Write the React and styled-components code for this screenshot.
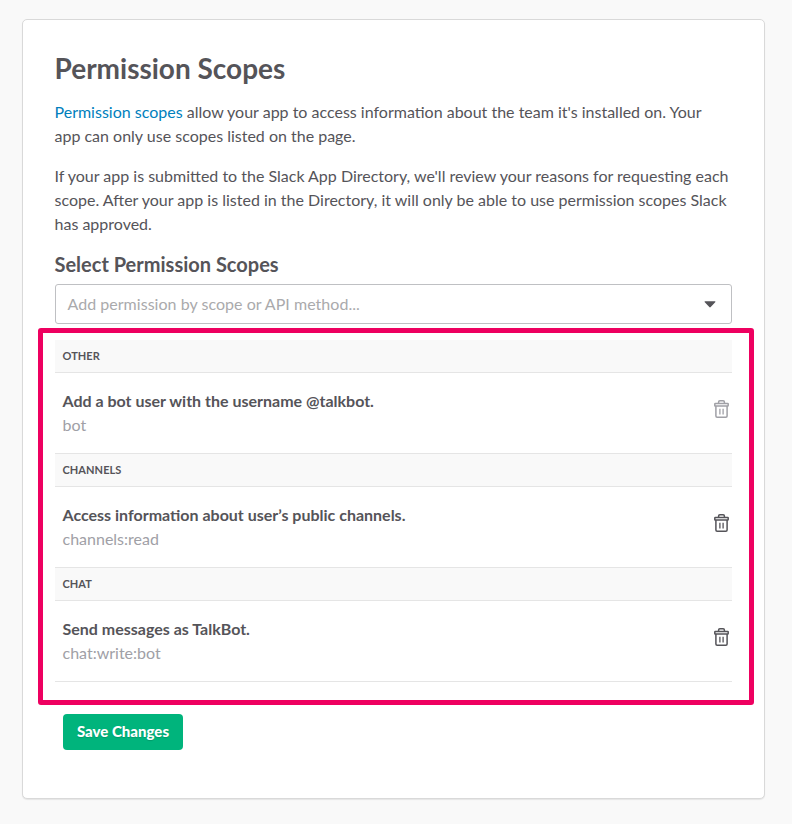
import React from 'react';
import styled, { createGlobalStyle } from 'styled-components';

const GlobalStyle = createGlobalStyle`
  *, *::before, *::after { box-sizing: border-box; }
  body { margin: 0; background: #f9f9f9; font-family: Lato, sans-serif; color: #555459; }
`;

const Page = styled.main`
  min-height: 824px;
  padding: 19px 27px 25px 22px;
  background: #f9f9f9;
`;

const Card = styled.section`
  height: 780px;
  padding: 30px 32px 0;
  background: #fff;
  border: 1px solid #d9d9d9;
  border-radius: 5px;
  box-shadow: 0 1px 1px rgba(0, 0, 0, 0.08);
`;

const Title = styled.h1`
  margin: 0 0 14px -0.5px;
  font-size: 28px;
  line-height: 36px;
  font-weight: 700;
`;

const Paragraph = styled.p`
  margin: 0 0 16px -0.5px;
  font-size: 16px;
  line-height: 24px;
  white-space: nowrap;
`;

const Link = styled.a`
  color: #0080bd;
  text-decoration: none;
`;

const Subtitle = styled.h2`
  margin: 0 0 8px -0.5px;
  font-size: 20px;
  line-height: 24px;
  font-weight: 700;
`;

const Select = styled.div`
  display: flex;
  align-items: center;
  justify-content: space-between;
  height: 40px;
  padding: 0 15px 0 11.5px;
  border: 1px solid #bfc0c3;
  border-radius: 3px;
  color: #aaaaac;
  font-size: 16px;
  line-height: 24px;
`;

const Placeholder = styled.span`
  letter-spacing: 0.03px;
`;

const Highlight = styled.div`
  height: 377px;
  margin: 4px -22px 0 -17px;
  padding: 7px 17px 0 12px;
  border: 5px solid #ee0060;
  border-radius: 3px;
`;

const GroupHeader = styled.h3`
  height: 33px;
  margin: 0;
  padding-left: 7.5px;
  background: #f9f9f9;
  border-bottom: 1px solid #e5e5e5;
  font-size: 11px;
  line-height: 32px;
  font-weight: 700;
  letter-spacing: 0.06px;
`;

const ScopeRow = styled.div`
  display: flex;
  align-items: flex-start;
  justify-content: space-between;
  height: 81px;
  padding: 16px 3px 0 7.5px;
  border-bottom: 1px solid #e5e5e5;
`;

const ScopeTitle = styled.div`
  font-size: 16px;
  line-height: 24px;
  font-weight: 700;
`;

const ScopeName = styled.div`
  font-size: 16px;
  line-height: 24px;
  color: #a0a0a6;
`;

const DeleteButton = styled.button`
  display: flex;
  margin-top: 11px;
  padding: 0;
  border: 0;
  background: none;
  color: ${(p) => (p.$muted ? '#a0a0a6' : '#555459')};
`;

const SaveButton = styled.button`
  display: block;
  width: 120px;
  height: 36px;
  margin: 9px 0 0 8px;
  padding: 0 0 2px;
  border: 0;
  border-radius: 4px;
  background: #00b47c;
  color: #fff;
  font: 900 15px/34px Lato, sans-serif;
  text-shadow: 0 1px 1px rgba(0, 0, 0, 0.15);
`;

const TrashIcon = () => (
  <svg width="15" height="18" viewBox="0 0 15 18" fill="none" stroke="currentColor" strokeWidth="1.5" strokeLinejoin="round">
    <path d="M4.6 3.3V2.1C4.6 1.3 5.1.8 5.9.8h3.2c.8 0 1.3.5 1.3 1.3v1.2" />
    <rect x=".8" y="3.4" width="13.4" height="2.6" rx=".5" />
    <path d="M1.9 6v10c0 .8.4 1.2 1.2 1.2h8.8c.8 0 1.2-.4 1.2-1.2V6" />
    <path d="M5.9 8.7v5.8M9.1 8.7v5.8" strokeWidth="1.3" />
  </svg>
);

const Caret = () => (
  <svg width="12" height="8" viewBox="0 0 12 8" fill="#555459">
    <path d="M1.3 1.2h9.4c.7 0 .9.6.5 1.1L6.7 7.1a1 1 0 0 1-1.4 0L.8 2.3c-.4-.5-.2-1.1.5-1.1z" />
  </svg>
);

const scopes = [
  { group: 'OTHER', title: 'Add a bot user with the username @talkbot.', name: 'bot', muted: true },
  { group: 'CHANNELS', title: 'Access information about user’s public channels.', name: 'channels:read' },
  { group: 'CHAT', title: 'Send messages as TalkBot.', name: 'chat:write:bot' },
];

export default function App() {
  return (
    <Page>
      <GlobalStyle />
      <Card>
        <Title>Permission Scopes</Title>
        <Paragraph>
          <Link>Permission scopes</Link> allow your app to access information about the team it's installed on. Your
          <br />
          app can only use scopes listed on the page.
        </Paragraph>
        <Paragraph>
          If your app is submitted to the Slack App Directory, we'll review your reasons for requesting each
          <br />
          scope. After your app is listed in the Directory, it will only be able to use permission scopes Slack
          <br />
          has approved.
        </Paragraph>
        <Subtitle>Select Permission Scopes</Subtitle>
        <Select>
          <Placeholder>Add permission by scope or API method...</Placeholder>
          <Caret />
        </Select>
        <Highlight>
          {scopes.map((s) => (
            <React.Fragment key={s.group}>
              <GroupHeader>{s.group}</GroupHeader>
              <ScopeRow>
                <div>
                  <ScopeTitle>{s.title}</ScopeTitle>
                  <ScopeName>{s.name}</ScopeName>
                </div>
                <DeleteButton $muted={s.muted} aria-label="Remove scope">
                  <TrashIcon />
                </DeleteButton>
              </ScopeRow>
            </React.Fragment>
          ))}
        </Highlight>
        <SaveButton>Save Changes</SaveButton>
      </Card>
    </Page>
  );
}
